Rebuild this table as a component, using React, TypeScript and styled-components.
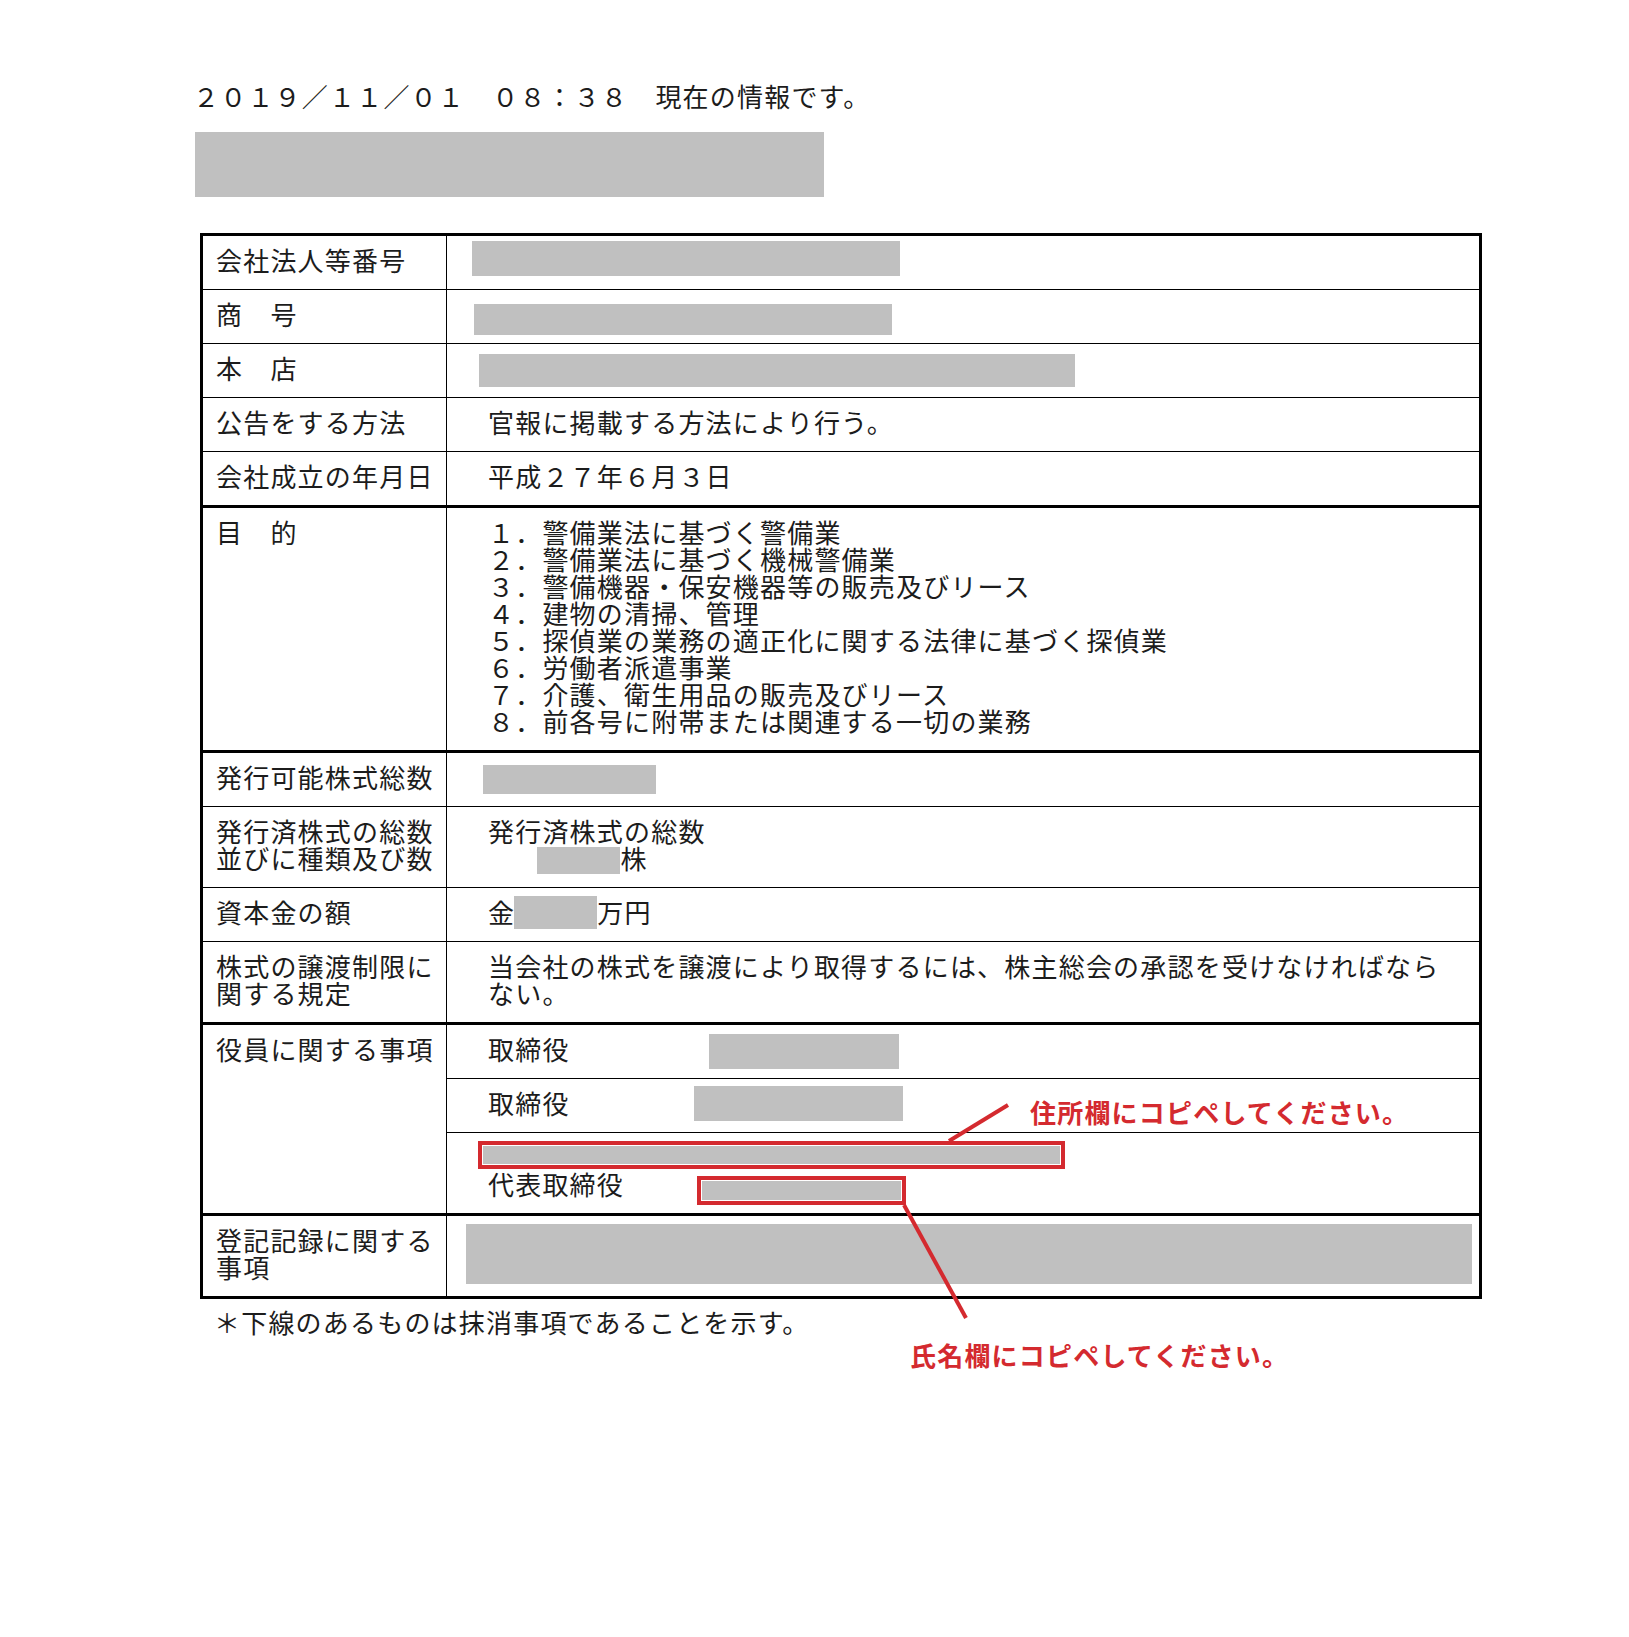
import React from "react";
import styled, { createGlobalStyle } from "styled-components";

const GlobalStyle = createGlobalStyle`
  html, body {
    margin: 0;
    padding: 0;
    background: #ffffff;
  }
  body {
    font-family: "Noto Sans CJK JP", "Liberation Serif", serif;
  }
`;

const LINE = 27;

const Page = styled.div`
  position: relative;
  width: 1629px;
  height: 1637px;
  box-sizing: border-box;
  padding: 82px 0 0 193px;
  overflow: hidden;
  font-family: "Noto Sans CJK JP", "Liberation Serif", serif;
  font-size: 26px;
  line-height: ${LINE}px;
  letter-spacing: 1.2px;
  color: #1c1c1c;
`;

const Stamp = styled.div`
  white-space: nowrap;
`;

const TitleRedact = styled.div`
  margin: 23px 0 0 2px;
  width: 629px;
  height: 65px;
  background: #c0c0c0;
`;

const Table = styled.div`
  margin: 36px 0 0 7px;
  width: 1282px;
  box-sizing: border-box;
  border: 3px solid #000000;
  display: flex;
  flex-direction: column;
`;

const Row = styled.div<{ $thick?: boolean }>`
  display: grid;
  grid-template-columns: 243px 1fr;
  border-bottom: ${(p) => (p.$thick ? "3px" : "1px")} solid #000000;
  &:last-child {
    border-bottom: none;
  }
`;

const Label = styled.div`
  padding: 10px 0 16px 13px;
  white-space: nowrap;
`;

const Value = styled.div`
  border-left: 1px solid #000000;
  padding: 10px 8px 16px 41px;
  white-space: nowrap;
`;

const ValueStack = styled.div`
  border-left: 1px solid #000000;
  display: flex;
  flex-direction: column;
`;

const SubRow = styled.div`
  padding: 10px 8px 16px 41px;
  white-space: nowrap;
  & + & {
    border-top: 1px solid #000000;
  }
`;

const Line = styled.div`
  white-space: nowrap;
`;

type BoxProps = { $w: number; $h: number; $top?: number; $dx?: number };

const Redact = styled.span<BoxProps>`
  display: inline-block;
  vertical-align: top;
  box-sizing: border-box;
  width: ${(p) => p.$w}px;
  height: ${(p) => p.$h}px;
  margin-left: ${(p) => p.$dx ?? 0}px;
  margin-top: ${(p) => p.$top ?? 0}px;
  margin-bottom: ${(p) => LINE - p.$h - (p.$top ?? 0)}px;
  background: #c0c0c0;
`;

const RedFrame = styled(Redact)`
  border: 4px solid #d42a2f;
  padding: 1px;
  background: #c0c0c0;
  background-clip: content-box;
`;

const Footnote = styled.div`
  margin: 9px 0 0 21px;
  white-space: nowrap;
`;

const Callout = styled.div<{ $x: number; $y: number }>`
  position: absolute;
  left: ${(p) => p.$x}px;
  top: ${(p) => p.$y}px;
  font-family: "Noto Sans CJK JP", "Liberation Sans", sans-serif;
  font-weight: 700;
  font-size: 26px;
  line-height: 30px;
  letter-spacing: 1.2px;
  color: #d42a2f;
  white-space: nowrap;
`;

const Pointers = styled.svg`
  position: absolute;
  left: 0;
  top: 0;
  pointer-events: none;
`;

const purposes = [
  "１．警備業法に基づく警備業",
  "２．警備業法に基づく機械警備業",
  "３．警備機器・保安機器等の販売及びリース",
  "４．建物の清掃、管理",
  "５．探偵業の業務の適正化に関する法律に基づく探偵業",
  "６．労働者派遣事業",
  "７．介護、衛生用品の販売及びリース",
  "８．前各号に附帯または関連する一切の業務",
];

const IDEO_SPACE_2 = "\u3000\u3000";

export default function App() {
  return (
    <>
      <GlobalStyle />
      <Page>
        <Stamp>２０１９／１１／０１　０８：３８　現在の情報です。</Stamp>
        <TitleRedact />
        <Table>
          <Row>
            <Label>会社法人等番号</Label>
            <Value>
              <Redact $w={428} $h={35} $top={-5} $dx={-16} />
            </Value>
          </Row>
          <Row>
            <Label>商　号</Label>
            <Value>
              <Redact $w={418} $h={31} $top={4} $dx={-14} />
            </Value>
          </Row>
          <Row>
            <Label>本　店</Label>
            <Value>
              <Redact $w={596} $h={33} $top={0} $dx={-9} />
            </Value>
          </Row>
          <Row>
            <Label>公告をする方法</Label>
            <Value>官報に掲載する方法により行う。</Value>
          </Row>
          <Row $thick>
            <Label>会社成立の年月日</Label>
            <Value>平成２７年６月３日</Value>
          </Row>
          <Row $thick>
            <Label>目　的</Label>
            <Value>
              {purposes.map((p) => (
                <Line key={p}>{p}</Line>
              ))}
            </Value>
          </Row>
          <Row>
            <Label>発行可能株式総数</Label>
            <Value>
              <Redact $w={173} $h={29} $top={2} $dx={-5} />
            </Value>
          </Row>
          <Row>
            <Label>
              発行済株式の総数
              <br />
              並びに種類及び数
            </Label>
            <Value>
              <Line>発行済株式の総数</Line>
              <Line>
                {IDEO_SPACE_2}
                <Redact $w={83} $h={27} $top={3} $dx={-5} />
                株
              </Line>
            </Value>
          </Row>
          <Row>
            <Label>資本金の額</Label>
            <Value>
              金<Redact $w={83} $h={33} $top={-2} $dx={-1} />
              万円
            </Value>
          </Row>
          <Row $thick>
            <Label>
              株式の譲渡制限に
              <br />
              関する規定
            </Label>
            <Value>
              当会社の株式を譲渡により取得するには、株主総会の承認を受けなければなら
              <br />
              ない。
            </Value>
          </Row>
          <Row $thick>
            <Label>役員に関する事項</Label>
            <ValueStack>
              <SubRow>
                取締役
                <Redact $w={190} $h={35} $top={-1} $dx={139} />
              </SubRow>
              <SubRow>
                取締役
                <Redact $w={209} $h={35} $top={-3} $dx={124} />
              </SubRow>
              <SubRow>
                <Line>
                  <RedFrame $w={587} $h={28} $top={-2} $dx={-10} />
                </Line>
                <Line>
                  代表取締役
                  <RedFrame $w={209} $h={29} $top={6} $dx={73} />
                </Line>
              </SubRow>
            </ValueStack>
          </Row>
          <Row>
            <Label>
              登記記録に関する
              <br />
              事項
            </Label>
            <Value>
              <Redact $w={1006} $h={60} $top={-2} $dx={-22} />
            </Value>
          </Row>
        </Table>
        <Footnote>＊下線のあるものは抹消事項であることを示す。</Footnote>

        <Pointers width={1629} height={1637} viewBox="0 0 1629 1637">
          <line x1={1008} y1={1105} x2={949} y2={1141} stroke="#d42a2f" strokeWidth={4} />
          <line x1={904} y1={1205} x2={966} y2={1318} stroke="#d42a2f" strokeWidth={4} />
        </Pointers>
        <Callout $x={1030} $y={1097}>住所欄にコピペしてください。</Callout>
        <Callout $x={910} $y={1340}>氏名欄にコピペしてください。</Callout>
      </Page>
    </>
  );
}
